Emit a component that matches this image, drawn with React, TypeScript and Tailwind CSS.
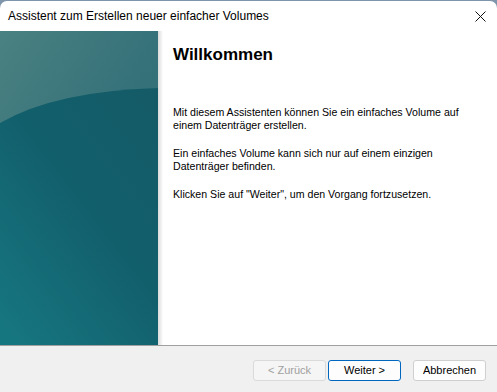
export default function App() {
  return (
    <div className="w-[497px] h-[392px] bg-[#7f95ab] pt-px overflow-hidden">
      <div
        className="flex flex-col h-full bg-white rounded-t-[7px] overflow-hidden"
        style={{ fontFamily: '"Liberation Sans", Arial, sans-serif' }}
      >
        <div className="h-[30px] flex items-center justify-between pl-[8px] pr-[10px] text-[12px] text-black">
          <span>Assistent zum Erstellen neuer einfacher Volumes</span>
          <svg width="11" height="11" viewBox="0 0 11 11" className="mr-[1px]">
            <path d="M0.5 0.5 L10.5 10.5 M10.5 0.5 L0.5 10.5" stroke="#111" strokeWidth="1" />
          </svg>
        </div>

        <div className="flex flex-1">
          <div className="w-[158px] h-full">
            <svg width="158" height="314" viewBox="0 0 158 314" className="block">
              <defs>
                <linearGradient id="up" x1="0" y1="0" x2="0.8" y2="1">
                  <stop offset="0" stopColor="#4a8181" />
                  <stop offset="0.5" stopColor="#36727a" />
                  <stop offset="1" stopColor="#296870" />
                </linearGradient>
                <linearGradient id="low" x1="0.9" y1="0" x2="0.1" y2="1">
                  <stop offset="0" stopColor="#145b67" />
                  <stop offset="0.45" stopColor="#125f6c" />
                  <stop offset="1" stopColor="#167680" />
                </linearGradient>
              </defs>
              <rect width="158" height="314" fill="url(#up)" />
              <path d="M0 92 Q55 60 158 57 L158 314 L0 314 Z" fill="url(#low)" />
            </svg>
          </div>
          <div className="w-[5px] bg-gradient-to-r from-[#dcdcdc] via-[#ececec] to-white" />
          <div className="flex-1 pl-[10px] pt-[13px] text-black">
            <h1 className="text-[17px] font-bold leading-[22px]">Willkommen</h1>
            <div className="mt-[40px] text-[10.6px] leading-[13px] flex flex-col gap-[15px]">
              <p>
                Mit diesem Assistenten können Sie ein einfaches Volume auf
                <br />
                einem Datenträger erstellen.
              </p>
              <p>
                Ein einfaches Volume kann sich nur auf einem einzigen
                <br />
                Datenträger befinden.
              </p>
              <p>Klicken Sie auf "Weiter", um den Vorgang fortzusetzen.</p>
            </div>
          </div>
        </div>

        <div className="h-[47px] border-t border-[#a0a0a0] bg-[#f0f0f0] flex items-start justify-end pt-[14px] pr-[11px] text-[11px]">
          <button className="w-[73px] h-[21px] rounded-[3px] border border-[#dadada] bg-[#f5f5f5] text-[#a0a0a0]">
            &lt; Zurück
          </button>
          <button className="ml-[2px] w-[73px] h-[21px] rounded-[3px] border border-[#0067c0] bg-[#fdfdfd] text-black">
            Weiter &gt;
          </button>
          <button className="ml-[12px] w-[73px] h-[21px] rounded-[3px] border border-[#cfcfcf] bg-[#fdfdfd] text-black">
            Abbrechen
          </button>
        </div>
      </div>
    </div>
  );
}
